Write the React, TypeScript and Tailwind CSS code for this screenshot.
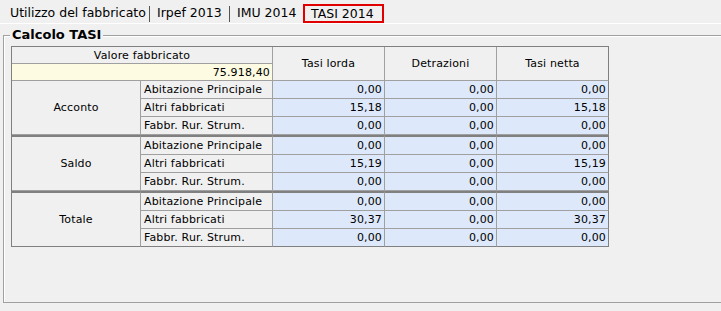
import React from "react";

type Row = { label: string; lorda: string; detr: string; netta: string };
type Group = { name: string; rows: Row[] };

const groups: Group[] = [
  {
    name: "Acconto",
    rows: [
      { label: "Abitazione Principale", lorda: "0,00", detr: "0,00", netta: "0,00" },
      { label: "Altri fabbricati", lorda: "15,18", detr: "0,00", netta: "15,18" },
      { label: "Fabbr. Rur. Strum.", lorda: "0,00", detr: "0,00", netta: "0,00" },
    ],
  },
  {
    name: "Saldo",
    rows: [
      { label: "Abitazione Principale", lorda: "0,00", detr: "0,00", netta: "0,00" },
      { label: "Altri fabbricati", lorda: "15,19", detr: "0,00", netta: "15,19" },
      { label: "Fabbr. Rur. Strum.", lorda: "0,00", detr: "0,00", netta: "0,00" },
    ],
  },
  {
    name: "Totale",
    rows: [
      { label: "Abitazione Principale", lorda: "0,00", detr: "0,00", netta: "0,00" },
      { label: "Altri fabbricati", lorda: "30,37", detr: "0,00", netta: "30,37" },
      { label: "Fabbr. Rur. Strum.", lorda: "0,00", detr: "0,00", netta: "0,00" },
    ],
  },
];

const cell = "border-r border-b border-[#a0a0a0]";

export default function App() {
  return (
    <div className="h-[311px] w-[721px] overflow-hidden bg-[#f0f0f0] font-['DejaVu_Sans',Verdana,sans-serif] text-[11px] leading-none tracking-[0.15px] text-black">
      {/* tab strip */}
      <div className="flex h-[24px] items-stretch border-b border-white pl-[6px] text-[12.5px] tracking-normal">
        <div className="flex w-[144px] items-end justify-between pb-[4px] pl-[4px]">
          <span>Utilizzo del fabbricato</span>
          <span className="mb-[-3px] h-[16px] w-px bg-[#555]" />
        </div>
        <div className="flex w-[80px] items-end justify-between pb-[4px] pl-[7px]">
          <span>Irpef 2013</span>
          <span className="mb-[-3px] h-[16px] w-px bg-[#555]" />
        </div>
        <div className="flex w-[73px] items-end pb-[4px] pl-[7px]">
          <span>IMU 2014</span>
        </div>
        <div className="mt-[4px] flex w-[81px] items-center border-2 border-[#e00000] pl-[6px] pt-[1px]">
          TASI 2014
        </div>
      </div>

      {/* group box */}
      <div className="relative ml-[3px] mt-[11px] h-[268px] w-[730px] border border-r-0 border-[#a0a0a0] shadow-[inset_1px_1px_0_#fff]">
        <span className="absolute left-[6px] top-[-8px] bg-[#f0f0f0] px-[2px] text-[13px] font-bold tracking-normal">
          Calcolo TASI
        </span>

        <div className="ml-[7px] mt-[10px] grid w-[598px] grid-cols-[129px_132px_112px_112px_112px] grid-rows-[17px_17px_18px_18px_18px_20px_18px_18px_20px_18px_18px] border-l border-t border-[#808080]">
          <div className={`${cell} col-span-2 flex items-center justify-center`}>Valore fabbricato</div>
          <div className={`${cell} row-span-2 flex items-center justify-center`}>Tasi lorda</div>
          <div className={`${cell} row-span-2 flex items-center justify-center`}>Detrazioni</div>
          <div className={`${cell} row-span-2 flex items-center justify-center border-r-[#808080]`}>Tasi netta</div>
          <div className={`${cell} col-span-2 flex items-center justify-end bg-[#fdfbe1] pr-[2px]`}>75.918,40</div>

          {groups.map((g, gi) => {
            const thick = gi > 0 ? "border-t-2 border-t-[#808080]" : "";
            return (
              <React.Fragment key={g.name}>
                <div className={`${cell} ${thick} row-span-3 flex items-center justify-center ${gi === 2 ? "border-b-[#808080]" : ""}`}>
                  {g.name}
                </div>
                {g.rows.map((r, ri) => {
                  const t = ri === 0 ? thick : "";
                  const last = gi === 2 && ri === 2 ? "border-b-[#808080]" : "";
                  return (
                    <React.Fragment key={r.label}>
                      <div className={`${cell} ${t} ${last} flex items-center pl-[3px]`}>{r.label}</div>
                      <div className={`${cell} ${t} ${last} flex items-center justify-end bg-[#dde9fb] pr-[2px]`}>{r.lorda}</div>
                      <div className={`${cell} ${t} ${last} flex items-center justify-end bg-[#dde9fb] pr-[2px]`}>{r.detr}</div>
                      <div className={`${cell} ${t} ${last} flex items-center justify-end border-r-[#808080] bg-[#dde9fb] pr-[2px]`}>{r.netta}</div>
                    </React.Fragment>
                  );
                })}
              </React.Fragment>
            );
          })}
        </div>
      </div>
    </div>
  );
}
